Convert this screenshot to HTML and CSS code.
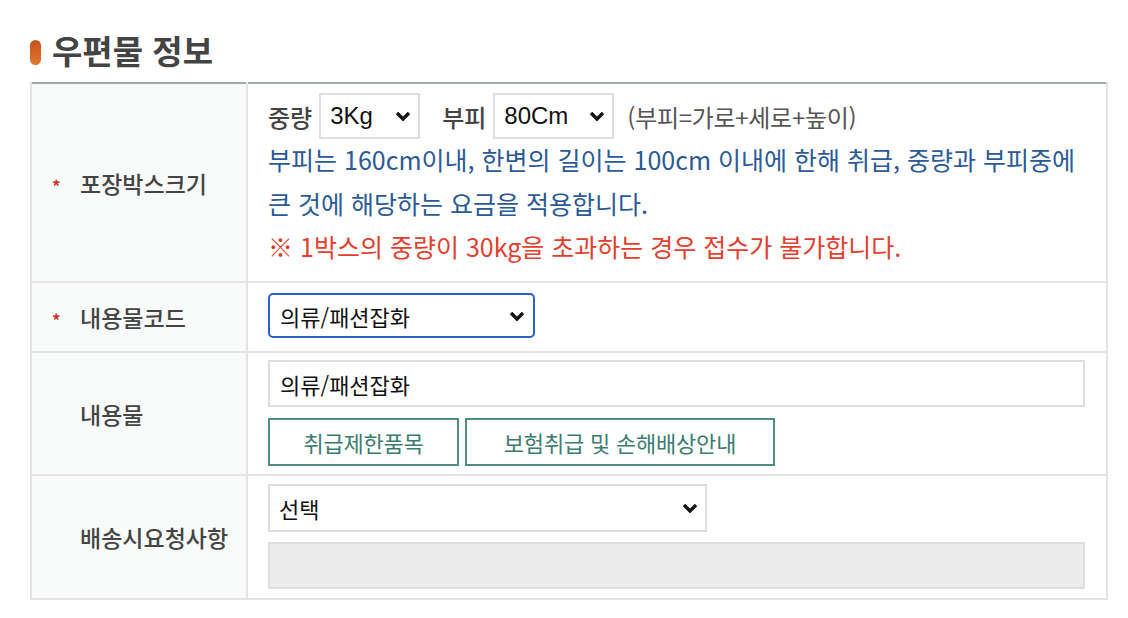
FILE: index.html
```html
<!DOCTYPE html>
<html lang="ko">
<head>
    <meta charset="UTF-8">
    <meta name="viewport" content="width=device-width, initial-scale=1.0">
    <title>우편물 정보</title>
    <link rel="stylesheet" href="styles.css">
</head>
<body>

<h2 class="sec-title"><span class="bar"></span>우편물 정보</h2>

<table class="form-table">
    <colgroup>
        <col class="col-th">
        <col>
    </colgroup>
    <tbody>
        <tr class="row-size">
            <th><span class="req">*</span>포장박스크기</th>
            <td>
                <div class="size-line">
                    <span class="lbl">중량</span>
                    <div class="sel sel-s"><span class="en">3Kg</span><svg class="chev" viewBox="0 0 16 10"><path d="M2 2 L8 8 L14 2" /></svg></div>
                    <span class="lbl">부피</span>
                    <div class="sel sel-m"><span class="en">80Cm</span><svg class="chev" viewBox="0 0 16 10"><path d="M2 2 L8 8 L14 2" /></svg></div>
                    <span class="hint">(부피=가로+세로+높이)</span>
                </div>
                <p class="note">부피는 160cm이내, 한변의 길이는 100cm 이내에 한해 취급, 중량과 부피중에<br>큰 것에 해당하는 요금을 적용합니다.</p>
                <p class="warn">※ 1박스의 중량이 30kg을 초과하는 경우 접수가 불가합니다.</p>
            </td>
        </tr>
        <tr class="row-code">
            <th><span class="req">*</span>내용물코드</th>
            <td>
                <div class="sel sel-focus"><span>의류/패션잡화</span><svg class="chev" viewBox="0 0 16 10"><path d="M2 2 L8 8 L14 2" /></svg></div>
            </td>
        </tr>
        <tr class="row-item">
            <th class="no-req">내용물</th>
            <td>
                <div class="input">의류/패션잡화</div>
                <div class="btns">
                    <button class="btn-line b1">취급제한품목</button>
                    <button class="btn-line b2">보험취급 및 손해배상안내</button>
                </div>
            </td>
        </tr>
        <tr class="row-req">
            <th class="no-req">배송시요청사항</th>
            <td>
                <div class="sel sel-l"><span>선택</span><svg class="chev" viewBox="0 0 16 10"><path d="M2 2 L8 8 L14 2" /></svg></div>
                <div class="input input-off"></div>
            </td>
        </tr>
    </tbody>
</table>

</body>
</html>
```

FILE: styles.css
```css
body { margin: 0; padding: 30px 20px 0 30px; font-family: "Noto Sans CJK KR", "Noto Sans", sans-serif; color: #444; background: #fff; }

.sec-title { display: flex; align-items: center; gap: 11px; margin: 0 0 12px 0; font-size: 33px; font-weight: 700; color: #444; height: 40px; }
.sec-title .bar { width: 11px; height: 25px; border-radius: 6px; background: linear-gradient(#c9501c, #e0792e); margin-top: 4px; }

.form-table { width: 1078px; table-layout: fixed; border-collapse: collapse; border-top: 2px solid #9eacaa; }
.col-th { width: 216px; }
.form-table th, .form-table td { border: 2px solid #e4e4e4; }
.form-table tr:first-child th, .form-table tr:first-child td { border-top: none; }
.form-table th { background: #f9fafa; text-align: left; padding: 0 0 0 20px; font-size: 23px; font-weight: 500; color: #444; white-space: nowrap; }
.form-table th.no-req { padding-left: 48px; }
.form-table td { padding: 9px 20px 12px 20px; vertical-align: top; }
.req { display: inline-block; width: 28px; color: #d1322b; font-size: 17px; font-weight: 700; }

.size-line { display: flex; align-items: center; height: 46px; }
.lbl { font-size: 24px; font-weight: 500; color: #444; margin-right: 7px; }
.sel { display: flex; align-items: center; justify-content: space-between; box-sizing: border-box; height: 46px; border: 2px solid #dedede; background: #fff; padding: 0 7px 0 9px; font-size: 22px; color: #111; }
.sel .en { font-family: "Liberation Sans", Arial, sans-serif; font-size: 24px; }
.chev { width: 16px; height: 10px; fill: none; stroke: #111; stroke-width: 3.4; }
.sel-s { width: 101px; margin-right: 22px; }
.sel-m { width: 121px; margin-right: 13px; }
.hint { font-size: 24px; color: #555; letter-spacing: -0.3px; }

.note { margin: -2px 0 0 0; font-size: 25px; line-height: 44px; color: #2b5a95; }
.warn { margin: 0 0 2px 0; font-size: 25px; line-height: 42px; color: #e2402f; }

.row-code td { padding: 10px 20px 13px 20px; }
.sel-focus { width: 267px; height: 45px; border: 2px solid #2b60c7; border-radius: 5px; padding-left: 10px; padding-right: 8px; }

.row-item td { padding: 7px 20px 8px 20px; }
.input { box-sizing: border-box; width: 817px; height: 47px; border: 2px solid #dedede; padding: 0 10px; display: flex; align-items: center; font-size: 22px; color: #111; }
.btns { display: flex; gap: 6px; margin-top: 11px; }
.btn-line { box-sizing: border-box; height: 48px; border: 2px solid #4f8c83; background: #fff; color: #3b7b71; font-family: inherit; font-size: 22px; padding: 0; letter-spacing: -0.2px; }
.b1 { width: 191px; }
.b2 { width: 310px; }

.row-req td { padding: 8px 20px 9px 20px; }
.sel-l { width: 439px; height: 48px; }
.input-off { margin-top: 10px; height: 47px; background: #ececec; }
```
